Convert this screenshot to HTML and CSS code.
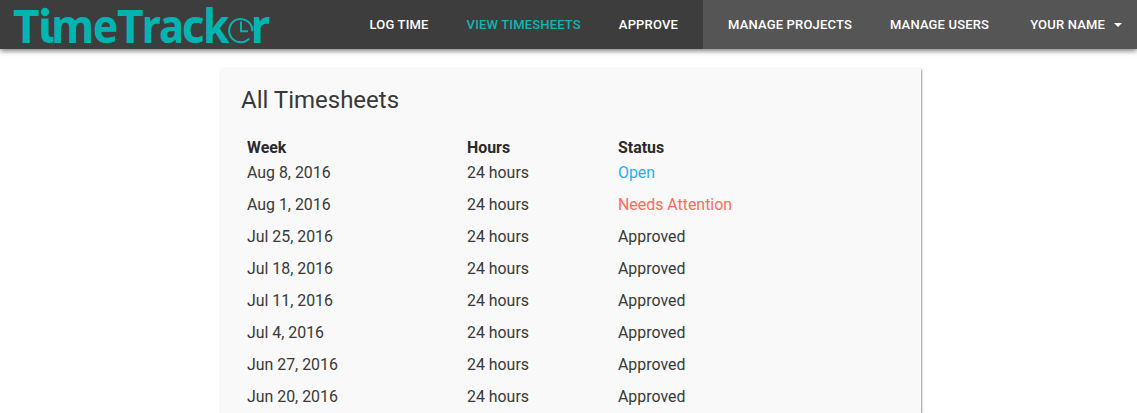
FILE: index.html
```html
<!DOCTYPE html>
<html lang="en">
<head>
<meta charset="utf-8">
<title>TimeTracker</title>
<link rel="stylesheet" href="styles.css">
</head>
<body>
<header class="navbar">
  <a class="brand" aria-label="TimeTracker">
    <svg class="logo" width="280" height="49" viewBox="0 0 280 49">
      <g class="logo-text">
        <text x="13" y="43">T</text>
        <text x="51.3" y="43" textLength="42.8" lengthAdjust="spacingAndGlyphs">m</text>
        <text x="92.7" y="43" textLength="25.5" lengthAdjust="spacingAndGlyphs">e</text>
        <text x="117" y="43">T</text>
        <text x="141.8" y="43" textLength="19" lengthAdjust="spacingAndGlyphs">r</text>
        <text x="159" y="43" textLength="25" lengthAdjust="spacingAndGlyphs">a</text>
        <text x="181.7" y="43" textLength="22.8" lengthAdjust="spacingAndGlyphs">c</text>
        <text x="203" y="43" textLength="26.5" lengthAdjust="spacingAndGlyphs">k</text>
        <text x="251" y="43" textLength="19" lengthAdjust="spacingAndGlyphs">r</text>
      </g>
      <circle cx="45" cy="12" r="4.2" fill="#00b5b1"/>
      <path d="M41.2 18.5h7.3v15q0 3.500 3 3.500q1.200 0 2-.3v5.500q-2 .8-4.500 .8q-7.800-.3-7.800-8.500z" fill="#00b5b1"/>
      <path d="M252.300 31.300A11.600 11.600 0 1 0 249.200 38.500" fill="none" stroke="#00b5b1" stroke-width="2.1"/>
      <path d="M241 21.500V31.200H248" fill="none" stroke="#00b5b1" stroke-width="2"/>
    </svg>
  </a>
  <nav class="menu">
    <div class="group">
      <a class="item">LOG TIME</a>
      <a class="item active">VIEW TIMESHEETS</a>
      <a class="item">APPROVE</a>
    </div>
    <div class="group admin">
      <a class="item">MANAGE PROJECTS</a>
      <a class="item">MANAGE USERS</a>
      <a class="item user">YOUR NAME<span class="caret"></span></a>
    </div>
  </nav>
</header>
<main class="card">
  <h1 class="title">All Timesheets</h1>
  <table class="sheets">
    <thead><tr><th class="week">Week</th><th class="hours">Hours</th><th>Status</th></tr></thead>
    <tbody>
      <tr><td>Aug 8, 2016</td><td>24 hours</td><td class="open">Open</td></tr>
      <tr><td>Aug 1, 2016</td><td>24 hours</td><td class="attention">Needs Attention</td></tr>
      <tr><td>Jul 25, 2016</td><td>24 hours</td><td>Approved</td></tr>
      <tr><td>Jul 18, 2016</td><td>24 hours</td><td>Approved</td></tr>
      <tr><td>Jul 11, 2016</td><td>24 hours</td><td>Approved</td></tr>
      <tr><td>Jul 4, 2016</td><td>24 hours</td><td>Approved</td></tr>
      <tr><td>Jun 27, 2016</td><td>24 hours</td><td>Approved</td></tr>
      <tr><td>Jun 20, 2016</td><td>24 hours</td><td>Approved</td></tr>
    </tbody>
  </table>
</main>
</body>
</html>
```
FILE: styles.css
```css
* { box-sizing: border-box; }
body {
  margin: 0;
  height: 413px;
  overflow: hidden;
  background: #fff;
  color: #383838;
  font-family: Roboto, sans-serif;
  font-size: 15.9px;
}
.navbar {
  display: flex;
  justify-content: space-between;
  height: 49px;
  background: #3d3d3d;
  box-shadow: 0 2px 5px rgba(0, 0, 0, .5);
}
.logo { display: block; overflow: visible; }
.logo-text {
  font: bold 46px "Noto Sans", sans-serif;
  fill: #00b5b1;
}
.menu, .group { display: flex; }
.group { gap: 38px; padding: 0 25px 0 0; }
.admin { padding: 0 15px 0 25px; background: #555; }
.item {
  display: flex;
  align-items: center;
  color: #fff;
  font-size: 13px;
  font-weight: 500;
  letter-spacing: .17px;
  line-height: 49px;
  white-space: nowrap;
}
.active { color: #12b5b0; }
.user { margin-left: 3px; }
.caret {
  margin-left: 9px;
  border: 4px solid transparent;
  border-top-color: #fff;
  border-bottom: 0;
}
.card {
  width: 701px;
  height: 345px;
  margin: 19px 0 0 220px;
  padding: 17px 21px 0;
  background: #f9f9f9;
  border-radius: 2px 2px 0 0;
  box-shadow: 1px 1px 2px rgba(0, 0, 0, .4);
}
.title {
  margin: 0 0 24px;
  font-size: 24px;
  font-weight: 400;
  line-height: 30px;
}
.sheets {
  width: 659px;
  table-layout: fixed;
  border-collapse: collapse;
}
.week { width: 220px; }
.hours { width: 151px; }
th, td { padding: 0 6px; text-align: left; }
th { height: 18px; line-height: 12px; color: #2a2a2a; }
td { height: 32px; line-height: 32px; }
.open { color: #1eb0f5; }
.attention { color: #ff6b5e; }
```
